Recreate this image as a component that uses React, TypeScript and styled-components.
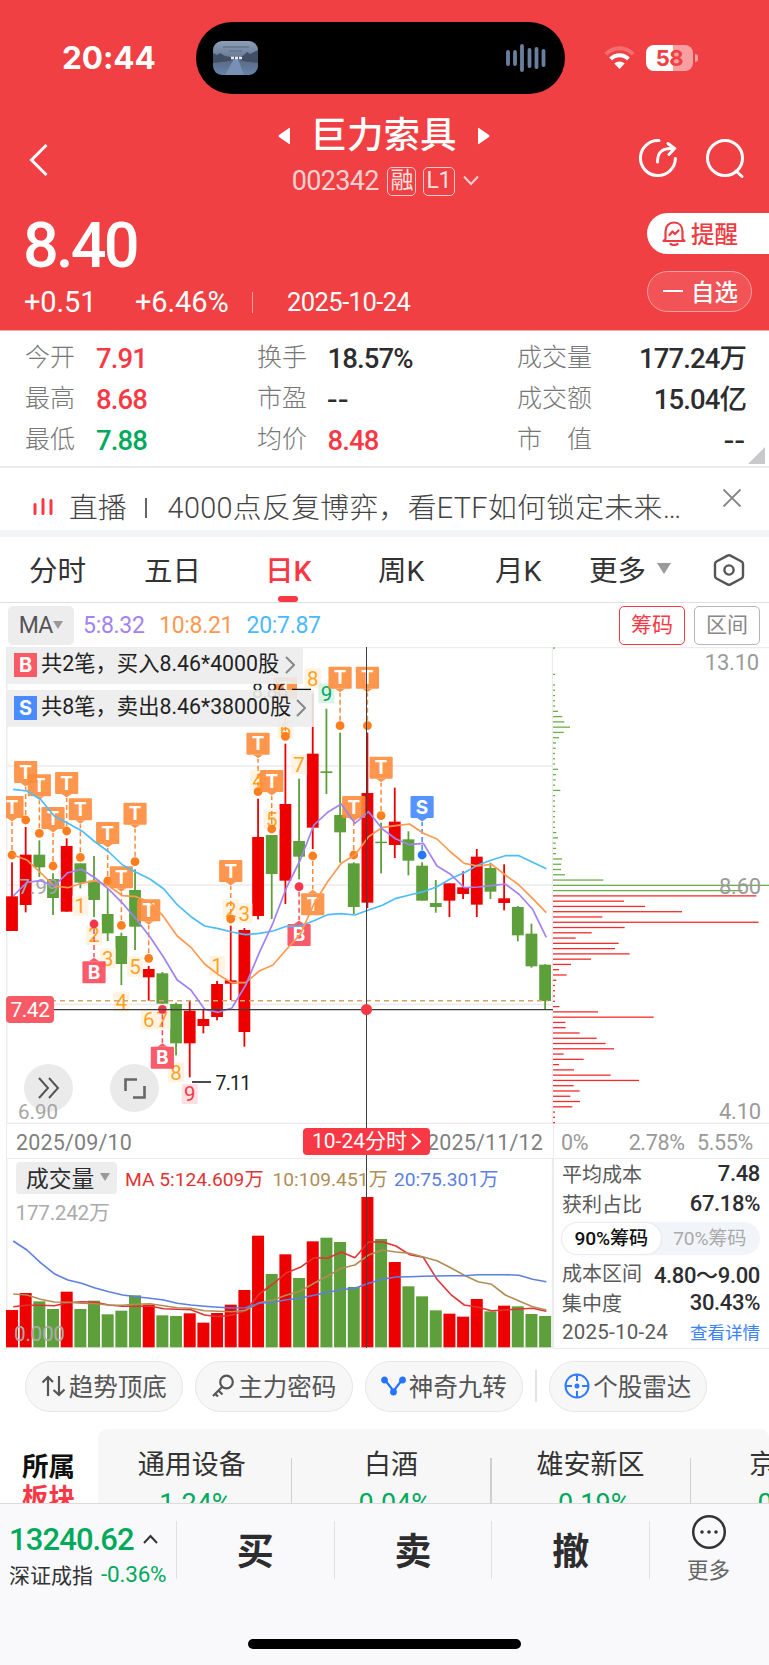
import React from "react";
import styled, { createGlobalStyle } from "styled-components";

const RED = "#f83845";
const GREEN = "#00a95c";
const UP = "#ee0000";
const DOWN = "#5d9f3a";
const FONT = `Roboto, "Noto Sans CJK SC", sans-serif`;

const Global = createGlobalStyle`
  * { box-sizing: border-box; }
  html, body { margin: 0; padding: 0; background: #fff; }
  body { width: 769px; height: 1665px; overflow: hidden; font-family: ${FONT}; color: #2d2d2f; }
  svg { display: block; flex: none; }
`;

const Page = styled.div`
  width: 769px;
  height: 1665px;
  display: flex;
  flex-direction: column;
  overflow: hidden;
  background: #fff;
`;

/* ---------- header ---------- */
const Header = styled.header`
  height: 331px;
  flex: none;
  background: #f04043;
  border-bottom: 1px solid #f8a5a7;
  color: #fff;
`;
const StatusBar = styled.div`
  height: 116px;
  display: flex;
  padding: 22px 0 0 62px;
`;
const Clock = styled.div`
  width: 134px;
  height: 72px;
  font: 700 31.5px/72px Inter, sans-serif;
  letter-spacing: -0.1px;
`;
const Island = styled.div`
  width: 369px;
  height: 72px;
  border-radius: 36px;
  background: #000;
  display: flex;
  align-items: center;
  justify-content: space-between;
  padding: 0 19px 0 17px;
`;
const StatusIcons = styled.div`
  height: 72px;
  margin: 0 0 0 39px;
  padding-bottom: 1px;
  display: flex;
  align-items: center;
  gap: 11px;
`;
const Battery = styled.div`
  width: 47px;
  height: 26px;
  border-radius: 8px;
  background: linear-gradient(90deg, #fff 57%, #f8a0a1 57%);
  color: #f04043;
  font: 700 22px/26px Inter, sans-serif;
  text-align: center;
  letter-spacing: -0.5px;
`;
const BatteryCap = styled.div`
  width: 3px;
  height: 8px;
  margin-left: -9px;
  border-radius: 0 3px 3px 0;
  background: #f8a0a1;
`;
const TitleBar = styled.div`
  height: 90px;
  display: grid;
  grid-template-columns: 250px 1fr 250px;
`;
const BackSlot = styled.div`
  padding: 27px 0 0 29px;
`;
const TitleActions = styled.div`
  display: flex;
  justify-content: flex-end;
  gap: 25px;
  padding: 22px 24px 0 0;
`;
const TitleCol = styled.div`
  display: flex;
  flex-direction: column;
  align-items: center;
`;
const StockName = styled.div`
  display: flex;
  align-items: center;
  gap: 20px;
  height: 40px;
  margin-right: 2px;
  font-size: 36.5px;
  font-weight: 500;
  line-height: 40px;
`;
const StockCode = styled.div`
  display: flex;
  align-items: center;
  gap: 6.5px;
  height: 30px;
  margin: 10px 0 0 4px;
  line-height: 30px;
  font-size: 27px;
  color: #fcd0d1;
  letter-spacing: -0.7px;
`;
const CodeText = styled.span`
  margin-right: 2px;
`;
const Badge = styled.span<{ $w: number }>`
  width: ${(p) => p.$w}px;
  height: 29px;
  border: 1.5px solid #fcc9ca;
  border-radius: 5px;
  font-size: 23px;
  line-height: 26px;
  text-align: center;
  letter-spacing: -0.5px;
  color: #fee2e2;
`;
const PriceArea = styled.div`
  height: 124px;
  display: flex;
  justify-content: space-between;
`;
const Price = styled.div`
  font-size: 63px;
  font-weight: 500;
  line-height: 70px;
  letter-spacing: -2.8px;
  padding: 5px 0 0 23px;
`;
const ChangeRow = styled.div`
  display: flex;
  align-items: center;
  height: 30px;
  margin-top: 6px;
  padding-left: 24px;
  font-size: 29px;
  line-height: 30px;
  letter-spacing: -0.1px;
`;
const ChangeItem = styled.span<{ $w: number }>`
  width: ${(p) => p.$w}px;
`;
const ChangeDate = styled.span`
  font-size: 25.5px;
  letter-spacing: -0.55px;
  padding-left: 34px;
  margin-left: 23px;
  border-left: 1px solid #f7a0a2;
  height: 21px;
  line-height: 21px;
`;
const PillCol = styled.div`
  display: flex;
  flex-direction: column;
  gap: 17px;
  width: 122px;
  padding-top: 7px;
`;
const AlertPill = styled.div`
  height: 41px;
  border-radius: 21px 0 0 21px;
  background: #fff;
  color: #ef3a41;
  display: flex;
  align-items: center;
  gap: 4px;
  padding: 0 0 1px 14px;
  font-size: 23.5px;
  font-weight: 500;
`;
const WatchPill = styled.div`
  height: 41px;
  width: 105px;
  border-radius: 21px;
  border: 1.5px solid #f79fa1;
  background: #f15356;
  display: flex;
  align-items: center;
  gap: 8px;
  padding: 0 0 1px 15px;
  font-size: 23.5px;
  font-weight: 500;
`;
const Minus = styled.i`
  width: 20px;
  height: 2.5px;
  background: #fff;
`;

/* ---------- quote stats ---------- */
const Stats = styled.section`
  position: relative;
  height: 137px;
  flex: none;
  padding: 6px 23px 0 25px;
  display: grid;
  grid-template-columns: 232px 260px 1fr;
  grid-auto-rows: 41.2px;
  border-bottom: 2px solid #ececee;
`;
const Stat = styled.div`
  display: flex;
  align-items: center;
  line-height: 41px;
`;
const StatLabel = styled.span<{ $w: number }>`
  width: ${(p) => p.$w}px;
  font-size: 25px;
  font-weight: 300;
  color: #777;
  white-space: pre;
`;
const StatValue = styled.span<{ $color?: string; $right?: boolean; $dash?: boolean }>`
  font-size: ${(p) => (p.$dash ? 34 : 27.5)}px;
  font-weight: ${(p) => (p.$dash ? 400 : 500)};
  letter-spacing: ${(p) => (p.$dash ? 1.5 : -0.9)}px;
  padding-top: 2px;
  color: ${(p) => p.$color ?? "#2d2d2f"};
  margin-left: ${(p) => (p.$right ? "auto" : 0)};
`;
const Corner = styled.i`
  position: absolute;
  right: 4px;
  bottom: 2px;
  border-bottom: 17px solid #c9c9cb;
  border-left: 17px solid transparent;
`;

/* ---------- live notice ---------- */
const Notice = styled.section`
  height: 62px;
  flex: none;
  display: flex;
  padding: 17px 27px 0 33px;
  font-size: 28.8px;
  font-weight: 300;
  line-height: 46px;
  color: #444;
  white-space: pre;
`;
const NoticeTag = styled.span`
  margin: 0 18px 0 16px;
`;
const NoticeBar = styled.i`
  width: 2px;
  height: 20px;
  margin: 13px 21px 0 0;
  background: #666;
`;
const NoticeText = styled.span`
  flex: 1;
  letter-spacing: 0.34px;
`;
const Band = styled.div`
  height: 7px;
  flex: none;
  background: #f2f4f8;
`;

/* ---------- tabs ---------- */
const Tabs = styled.nav`
  height: 66px;
  flex: none;
  display: grid;
  grid-template-columns: 115px 121px 113px 117px 94px 124px 32px;
  align-items: center;
  padding-left: 29px;
  border-bottom: 1.5px solid #dedee0;
  font-size: 28.5px;
`;
const Tab = styled.span<{ $active?: boolean }>`
  justify-self: start;
  height: 65px;
  padding-bottom: 3px;
  color: ${(p) => (p.$active ? RED : "#333")};
  font-weight: ${(p) => (p.$active ? 500 : 400)};
  position: relative;
  display: flex;
  align-items: center;
  gap: 11px;
  &::after {
    content: "";
    display: ${(p) => (p.$active ? "block" : "none")};
    position: absolute;
    bottom: 0;
    left: 50%;
    margin-left: -10px;
    width: 20px;
    height: 6px;
    border-radius: 3px;
    background: ${RED};
  }
`;
const Caret = styled.i<{ $w: number; $h: number }>`
  border-top: ${(p) => p.$h}px solid #999;
  border-left: ${(p) => p.$w / 2}px solid transparent;
  border-right: ${(p) => p.$w / 2}px solid transparent;
`;

/* ---------- MA row ---------- */
const MaRow = styled.div`
  height: 44px;
  flex: none;
  display: flex;
  align-items: center;
  padding: 0 9px 0 8px;
  font-size: 23px;
`;
const MaButton = styled.span`
  width: 66px;
  height: 39px;
  border-radius: 5px;
  background: #ededed;
  color: #555;
  display: flex;
  align-items: center;
  justify-content: center;
  gap: 1px;
  font-size: 23px;
  letter-spacing: -1px;
  margin-right: 9px;
`;
const MaValue = styled.span<{ $color: string; $w: number }>`
  width: ${(p) => p.$w}px;
  color: ${(p) => p.$color};
  letter-spacing: -0.3px;
`;
const ModeButton = styled.span<{ $active?: boolean }>`
  width: 66px;
  height: 39px;
  border: 1.5px solid ${(p) => (p.$active ? RED : "#b5b5b8")};
  color: ${(p) => (p.$active ? RED : "#888")};
  border-radius: 5px;
  font-size: 21px;
  line-height: 36px;
  text-align: center;
  margin-left: ${(p) => (p.$active ? "auto" : "9px")};
`;

/* ---------- chart area ---------- */
const ChartArea = styled.section`
  position: relative;
  height: 702px;
  flex: none;
  display: grid;
  grid-template-columns: 553px 216px;
`;
const Column = styled.div`
  display: flex;
  flex-direction: column;
`;
const AxisRow = styled.div`
  height: 35px;
  flex: none;
  display: flex;
  align-items: center;
  justify-content: space-between;
  border-bottom: 1.5px solid #ececee;
  color: #808080;
  font-size: 21.5px;
  padding-top: 2px;
`;
const DateAxis = styled(AxisRow)`
  margin-left: 6px;
  padding-left: 9px;
  padding-right: 10px;
  border-left: 1.5px solid #ececee;
  letter-spacing: 0.15px;
`;
const PercentAxis = styled(AxisRow)`
  padding-left: 7px;
  padding-right: 16px;
  border-left: 1.5px solid #ececee;
  color: #999;
  letter-spacing: -0.35px;
`;
const MiddlePercent = styled.span`
  margin-left: 28px;
`;
const Crosshair = styled.i`
  position: absolute;
  left: 366px;
  top: 0;
  width: 1px;
  height: 701px;
  background: #3f3f3f;
`;
const CrossDot = styled.i`
  position: absolute;
  left: 361px;
  top: 357px;
  width: 11px;
  height: 11px;
  border-radius: 50%;
  background: ${RED};
`;
const DateTag = styled.div`
  position: absolute;
  left: 303px;
  top: 481px;
  width: 127px;
  height: 27px;
  border-radius: 4px;
  background: ${RED};
  color: #fff;
  display: flex;
  align-items: center;
  justify-content: center;
  gap: 4px;
  font-size: 21px;
  line-height: 27px;
`;
const TradeBar = styled.div<{ $top: number; $w: number }>`
  position: absolute;
  left: 6px;
  top: ${(p) => p.$top}px;
  width: ${(p) => p.$w}px;
  height: 37px;
  padding: 0 8px 1px;
  background: rgba(236, 236, 236, 0.9);
  display: flex;
  align-items: center;
  font-size: 21.3px;
  line-height: 30px;
  white-space: nowrap;
  color: #222;
`;
const TradeFlag = styled.b<{ $color: string }>`
  width: 23px;
  height: 24px;
  margin-right: 4px;
  background: ${(p) => p.$color};
  color: #fff;
  font: 700 20px/24px Inter, sans-serif;
  text-align: center;
`;
const TradeText = styled.span`
  flex: 1;
  margin-top: -2px;
`;
const RoundButton = styled.div<{ $left: number }>`
  position: absolute;
  left: ${(p) => p.$left}px;
  top: 417px;
  width: 49px;
  height: 48px;
  border-radius: 50%;
  background: rgba(232, 232, 232, 0.9);
  display: grid;
  place-items: center;
`;
const LowLabel = styled.span`
  position: absolute;
  left: 18px;
  top: 453px;
  font-size: 20.5px;
  line-height: 24px;
  color: #a6a6a6;
`;
const PriceTag = styled.div`
  position: absolute;
  left: 6px;
  top: 349px;
  width: 48px;
  height: 27px;
  border-radius: 4px;
  background: #f95b66;
  color: #fff;
  font-size: 21px;
  line-height: 28px;
  text-align: center;
  letter-spacing: -0.5px;
`;
const VolumePane = styled.div`
  position: relative;
  height: 190px;
`;
const VolumeHead = styled.div`
  position: absolute;
  inset: 3px 0 auto 16px;
  display: flex;
  align-items: center;
  font-size: 19.2px;
`;
const VolumeButton = styled.span`
  width: 101px;
  height: 32px;
  border-radius: 4px;
  background: #ededed;
  display: flex;
  align-items: center;
  gap: 6px;
  padding: 0 0 2px 10px;
  margin-right: 8px;
  font-size: 22.8px;
`;
const VolumeMa = styled.span<{ $color: string; $w: number }>`
  width: ${(p) => p.$w}px;
  color: ${(p) => p.$color};
  white-space: nowrap;
`;
const ChipPanel = styled.div`
  height: 190px;
  border-left: 1.5px solid #ececee;
  border-bottom: 1.5px solid #ececee;
  padding: 0 9px 0 8px;
`;
const ChipRow = styled.div`
  height: 29.5px;
  display: flex;
  align-items: center;
  justify-content: space-between;
  font-size: 20px;
  color: #5a5a5a;
  white-space: nowrap;
`;
const ChipDate = styled.span`
  font-size: 20.5px;
  letter-spacing: 0.25px;
`;
const ChipValue = styled.b`
  font-size: 22px;
  font-weight: 500;
  color: #2d2d2f;
  letter-spacing: -0.35px;
`;
const ChipLink = styled.span`
  font-size: 17.5px;
  color: #3a80ff;
`;
const Segmented = styled.div`
  display: flex;
  height: 33px;
  margin: 4px 0 3px -1px;
  padding: 1px;
  border-radius: 17px;
  background: #f1f5f9;
`;
const Segment = styled.span<{ $active?: boolean }>`
  flex: 1;
  border-radius: 16px;
  background: ${(p) => (p.$active ? "#fff" : "transparent")};
  box-shadow: ${(p) => (p.$active ? "0 0 3px rgba(0,0,0,.1)" : "none")};
  color: ${(p) => (p.$active ? "#111" : "#aaa")};
  font-size: 19.2px;
  font-weight: ${(p) => (p.$active ? 500 : 400)};
  line-height: 31px;
  text-align: center;
  letter-spacing: -0.2px;
`;

/* ---------- tool pills ---------- */
const Tools = styled.div`
  height: 80px;
  flex: none;
  display: flex;
  align-items: flex-start;
  gap: 12.5px;
  padding: 12px 0 0 25px;
`;
const Tool = styled.span`
  width: 157.5px;
  height: 51px;
  border-radius: 26px;
  border: 1.5px solid #e6e6e8;
  background: #f7f7f8;
  color: #555;
  font-size: 24.5px;
  display: flex;
  align-items: center;
  justify-content: center;
  gap: 3px;
  padding-bottom: 2px;
`;
const ToolDivider = styled.i`
  width: 1.5px;
  height: 32px;
  margin-top: 9px;
  background: #e3e3e5;
`;

/* ---------- sectors ---------- */
const Sectors = styled.section`
  height: 74px;
  flex: none;
  display: flex;
  overflow: hidden;
`;
const SectorTitle = styled.div`
  width: 98px;
  flex: none;
  padding: 22px 0 0 22px;
  font-size: 26.5px;
  font-weight: 700;
  line-height: 31px;
  color: #111;
`;
const SectorAccent = styled.div`
  color: ${RED};
`;
const SectorPanel = styled.div`
  flex: none;
  width: 671px;
  display: flex;
  overflow: hidden;
  border-radius: 9px 9px 0 0;
  background: #f7f7f7;
  padding-top: 17px;
`;
const Sector = styled.div`
  position: relative;
  width: 199.4px;
  flex: none;
  text-align: center;
  font-size: 27px;
  line-height: 38px;
  color: #333;
  padding-right: 12px;
  &::after {
    content: "";
    position: absolute;
    right: 5px;
    top: 12px;
    width: 1.5px;
    height: 60px;
    background: #cfcfd1;
  }
`;
const SectorChange = styled.div`
  margin-top: 1px;
  font-size: 27px;
  color: ${GREEN};
`;

/* ---------- bottom bar ---------- */
const Bottom = styled.footer`
  height: 162px;
  flex: none;
  background: #f9f9fc;
  border-top: 1.5px solid #dbdbde;
  display: flex;
  flex-direction: column;
  align-items: center;
  justify-content: space-between;
`;
const Actions = styled.div`
  width: 769px;
  height: 95px;
  padding-top: 17px;
  display: flex;
`;
const IndexBox = styled.div`
  width: 176px;
  padding-left: 9px;
  margin-top: -1px;
`;
const IndexValue = styled.div`
  height: 38px;
  display: flex;
  align-items: center;
  gap: 9px;
  font-size: 31px;
  font-weight: 500;
  letter-spacing: -0.9px;
  color: ${GREEN};
`;
const IndexName = styled.div`
  display: flex;
  align-items: center;
  height: 31px;
  gap: 8px;
  font-size: 21px;
  color: #333;
  white-space: nowrap;
`;
const IndexChange = styled.span`
  color: ${GREEN};
  font-size: 22.5px;
  letter-spacing: -0.2px;
`;
const Action = styled.div`
  width: 157.7px;
  height: 58px;
  border-left: 1.5px solid #e0e0e3;
  font-size: 37px;
  font-weight: 700;
  line-height: 63px;
  text-align: center;
`;
const More = styled.div`
  flex: 1;
  height: 58px;
  border-left: 1.5px solid #e0e0e3;
  padding-right: 2px;
  display: flex;
  flex-direction: column;
  align-items: center;
  font-size: 21.5px;
  line-height: 30px;
  color: #666;
  gap: 6px;
  & > svg { margin-top: -7px; }
`;
const HomeIndicator = styled.i`
  width: 273px;
  height: 10px;
  border-radius: 5px;
  margin-bottom: 16px;
  background: #000;
`;

/* ---------- chart data ---------- */
const STEP = 13.67;
const cx = (i: number) => 12 + STEP * i;
const py = (v: number) => 640 + v / 3;
const vy = (v: number) => 1110 + v / 3;

// [rising, high, body top, body bottom, low]
const candles: [number, number, number, number, number][] = [
  [1, 667, 769, 873, 873], [1, 561, 644, 795, 817], [0, 601, 644, 682, 711], [0, 700, 717, 774, 825],
  [1, 595, 618, 815, 815], [0, 670, 670, 728, 745], [0, 648, 722, 780, 831], [0, 747, 822, 880, 903],
  [0, 878, 888, 972, 1035], [0, 688, 750, 860, 930], [1, 978, 987, 1012, 1082], [0, 996, 1000, 1091, 1091],
  [0, 1088, 1092, 1210, 1246], [1, 1083, 1112, 1210, 1312], [1, 1108, 1137, 1158, 1180], [1, 1023, 1032, 1131, 1141],
  [1, 857, 1021, 1031, 1080], [1, 864, 870, 1176, 1220], [1, 476, 591, 828, 838], [0, 585, 585, 702, 837],
  [1, 311, 492, 722, 792], [0, 416, 603, 650, 718], [1, 160, 341, 563, 627], [0, 206, 394, 399, 462],
  [0, 278, 525, 577, 668], [0, 667, 670, 801, 822], [1, 278, 459, 788, 804], [0, 548, 605, 609, 700],
  [1, 443, 545, 615, 654], [0, 574, 598, 662, 706], [0, 667, 677, 782, 782], [0, 720, 789, 801, 818],
  [1, 730, 730, 782, 831], [1, 694, 742, 762, 777], [1, 627, 650, 794, 831], [0, 668, 684, 755, 777],
  [1, 673, 775, 789, 811], [0, 798, 801, 886, 904], [0, 851, 881, 979, 983], [0, 973, 974, 1083, 1108],
];
const ma5 = [768, 727, 722, 738, 698, 688, 714, 748, 790, 838, 890, 952, 1020, 1050, 1108, 1117, 1104, 1036, 938, 850, 742, 660, 555, 517, 492, 550, 515, 567, 597, 614, 610, 678, 703, 743, 741, 737, 732, 763, 808, 892];
const ma10 = [645, 660, 698, 738, 743, 730, 722, 738, 767, 770, 786, 830, 888, 922, 972, 1004, 1028, 1028, 993, 975, 928, 883, 792, 725, 670, 645, 590, 562, 557, 552, 580, 597, 636, 670, 678, 673, 705, 735, 776, 818];
const ma20 = [448, 453, 478, 528, 550, 572, 606, 636, 675, 697, 717, 746, 794, 830, 858, 866, 876, 884, 880, 873, 859, 858, 842, 824, 821, 825, 810, 796, 775, 765, 755, 740, 716, 698, 675, 660, 647, 647, 667, 686];
const volumes = [600, 549, 574, 597, 545, 597, 572, 613, 602, 556, 584, 616, 618, 610, 638, 609, 584, 540, 377, 492, 433, 504, 394, 383, 396, 531, 261, 387, 456, 529, 559, 601, 611, 620, 567, 604, 587, 589, 612, 618];
const vma5 = [590, 586, 586, 587, 578, 575, 577, 585, 589, 589, 588, 596, 598, 599, 615, 620, 615, 602, 552, 522, 488, 472, 443, 445, 426, 443, 396, 395, 408, 434, 442, 508, 553, 585, 592, 602, 600, 597, 595, 604];
const vma10 = [552, 555, 568, 576, 577, 580, 581, 585, 586, 583, 581, 587, 593, 595, 602, 604, 605, 601, 578, 570, 555, 544, 520, 498, 475, 465, 435, 420, 426, 430, 441, 452, 473, 496, 515, 523, 555, 573, 590, 600];
const vma20 = [393, 420, 458, 491, 510, 520, 534, 545, 555, 560, 565, 570, 580, 585, 589, 592, 594, 593, 580, 577, 569, 565, 556, 547, 539, 535, 520, 508, 501, 500, 499, 498, 497, 497, 494, 494, 494, 496, 508, 515];

// [candle index, y, digit]
const counts: [number, number, string][] = [
  [5, 797, "1"], [6, 885, "2"], [7, 955, "3"], [8, 1085, "4"], [9, 980, "5"], [10, 1138, "6"], [11, 1138, "7"],
  [12, 1297, "8"], [13, 1362, "9"], [15, 977, "1"], [16, 808, "2"], [17, 820, "3"], [18, 421, "4"], [19, 538, "5"],
  [20, 268, "6"], [21, 373, "7"], [22, 115, "8"], [23, 160, "9"],
];
// [candle index, dot y, letter, flag below the dot]
const flags: [number, number, string, boolean?][] = [
  [2, 580, "T"], [0, 645, "T"], [1, 540, "T"], [3, 678, "T"], [4, 573, "T"], [5, 652, "T"], [7, 723, "T"],
  [8, 856, "T"], [9, 665, "T"], [10, 955, "T"], [16, 837, "T"], [18, 455, "T"], [19, 567, "T"], [20, 289, "T"],
  [24, 257, "T"], [25, 645, "T"], [26, 257, "T"], [27, 527, "T"], [30, 645, "S"],
  [22, 648, "T", true], [6, 852, "B", true], [11, 1108, "B", true], [21, 740, "B", true],
];
const flagColor: Record<string, [string, string]> = {
  T: ["#ff8b3a", "#fd7e1e"],
  S: ["#4389ff", "#2277ff"],
  B: ["#f94a5c", "#f5354a"],
};
const chips = [
  6, 0, 0, 0, 0, 6, 0, 6, 6, 6, 6, 6, 15, 28, 34, 51, 32, 18, 9, 8, 6, 6, 6, 15, 9, 8, 6, 22, 6, 6, 6, 6, 6, 6, 6, 10,
  15, 8, 9, 9, 27, 25, 24, 36, 151, 648, 568, 610, 213, 276, 387, 148, 617, 215, 116, 68, 197, 186, 230, 114, 54, 18,
  41, 10, 6, 6, 6, 6, 19, 135, 302, 37, 38, 80, 131, 158, 183, 32, 92, 18, 63, 173, 258, 62, 80, 52, 81, 58, 6, 6, 6,
];

const path = (vals: number[], y: (v: number) => number) =>
  vals.map((v, i) => `${i ? "L" : "M"}${(cx(i) + 1.2).toFixed(1)} ${y(v).toFixed(1)}`).join("");

function Flag({ i, y, letter, below }: { i: number; y: number; letter: string; below?: boolean }) {
  const x = cx(i);
  const dot = py(y);
  const [fill, dotFill] = flagColor[letter];
  const top = below ? dot + 37.3 : dot - 59;
  const tip = below
    ? `M${x - 5} ${top}L${x} ${top - 3.5}L${x + 5} ${top}Z`
    : `M${x - 5} ${top + 22}L${x} ${top + 25.5}L${x + 5} ${top + 22}Z`;
  return (
    <g>
      <path
        d={below ? `M${x} ${dot + 5}V${top - 4}` : `M${x} ${dot - 5}V${top + 26}`}
        stroke={fill}
        strokeWidth="1.5"
        strokeDasharray="5 3"
      />
      <g opacity=".9">
        <rect x={x - 11.6} y={top} width="23.2" height="22" rx="1" fill={fill} />
        <path d={tip} fill={fill} />
      </g>
      <text x={x} y={top + 17.5} fontSize="19" fontWeight="700" fontFamily="Inter, sans-serif" fill="#fff" textAnchor="middle">
        {letter}
      </text>
      <circle cx={x} cy={dot} r="4.4" fill={dotFill} />
    </g>
  );
}

function KLine() {
  return (
    <svg width="553" height="477" viewBox="0 647 553 477" fill="none" fontFamily={FONT}>
      <path d="M6 647.6H553M6 766H553M6 885H553M6 1004.5H553M6 1123.4H553M6.7 647V1124M552.5 647V1124" stroke="#ececee" strokeWidth="1.4" />
      <clipPath id="plot"><rect x="6" y="647" width="547" height="477" /></clipPath>
      <g clipPath="url(#plot)">
        {candles.map(([up, h, t, b, l], i) => (
          <g key={i} fill={up ? UP : DOWN}>
            <rect x={cx(i) - 0.9} y={py(h)} width="1.8" height={(l - h) / 3} />
            <rect x={cx(i) - 5.9} y={py(t)} width="11.8" height={Math.max((b - t) / 3, 1.5)} />
          </g>
        ))}
        {counts.map(([i, y, n], k) => {
          const hot = n === "9";
          const green = hot && i === 23;
          return (
            <g key={k}>
              <rect x={cx(i) - 8} y={py(y) - 10} width="16" height="20" fill={green ? "#d3f1e2" : hot ? "#ffdcdf" : "#fff1df"} opacity=".85" />
              <text x={cx(i)} y={py(y) + 7.3} fontSize="20.5" textAnchor="middle" fill={green ? GREEN : hot ? RED : "#ffa31f"}>{n}</text>
            </g>
          );
        })}
        {flags.map(([i, y, c, below], k) => <Flag key={k} i={i} y={y} letter={c} below={below} />)}
      </g>
      <path d="M6 1000.7H548" stroke="#d3a566" strokeWidth="1.5" strokeDasharray="5 4" />
      <text x="18.5" y="894" fontSize="20.5" fill="#a6a6a6">7.99</text>
      <g strokeWidth="1.7" strokeLinejoin="round">
        <path d={path(ma20, py)} stroke="#4cbcff" />
        <path d={path(ma10, py)} stroke="#ff9950" />
        <path d={path(ma5, py)} stroke="#a382f2" />
      </g>
      <path d="M6 1009.6H553" stroke="#3c3c3c" strokeWidth="1.3" />
      <path d="M192 1082H211M292 689.6H311" stroke="#111" strokeWidth="1.5" />
      <g fontSize="19.5" fill="#222" letterSpacing="-.8">
        <text x="215.5" y="1089.5">7.11</text>
        <text x="252" y="698">8.86</text>
      </g>
    </svg>
  );
}

function ChipChart() {
  return (
    <svg width="216" height="477" viewBox="553 647 216 477" fill="none" fontFamily={FONT}>
      <path d="M553 647.6H769M553 1123.4H769" stroke="#ececee" strokeWidth="1.4" />
      {chips.map((w, i) =>
        w ? <rect key={i} x="553" y={647.4 + 5.273 * i} width={w / 3} height="1.3" fill={i < 47 ? "#6cae48" : "#f42c2c"} /> : null,
      )}
      <g fontSize="22" fill="#9a9a9a" textAnchor="end" letterSpacing="-.2">
        <text x="759" y="669.5">13.10</text>
        <text x="761" y="894.3">8.60</text>
        <text x="761" y="1119">4.10</text>
      </g>
    </svg>
  );
}

function VolumeChart() {
  return (
    <svg width="553" height="190" viewBox="0 1159 553 190" fill="none" fontFamily={FONT}>
      <path d="M6.7 1158V1348M552.5 1158V1348M6 1347.5H553" stroke="#ececee" strokeWidth="1.4" />
      {volumes.map((v, i) => (
        <rect key={i} x={cx(i) - 6} y={vy(v)} width="12" height={1347.3 - vy(v)} fill={candles[i][0] ? UP : DOWN} />
      ))}
      <g fill="#ababab" letterSpacing="-.3" fontSize="20.8">
        <text x="15.5" y="1219.5">177.242万</text>
        <text x="14" y="1340.5">0.000</text>
      </g>
      <g strokeWidth="1.6" strokeLinejoin="round">
        <path d={path(vma5, vy)} stroke="#e03434" />
        <path d={path(vma10, vy)} stroke="#b18d55" />
        <path d={path(vma20, vy)} stroke="#5c7fe2" />
      </g>
    </svg>
  );
}

const Chevron = ({ w, h, color, sw = 2 }: { w: number; h: number; color: string; sw?: number }) => (
  <svg width={w} height={h} viewBox={`0 0 ${w} ${h}`} fill="none">
    <path d={`M1 1L${w - 1} ${h / 2}L1 ${h - 1}`} stroke={color} strokeWidth={sw} />
  </svg>
);

const quoteRows: [string, string, string?][][] = [
  [["今开", "7.91", RED], ["换手", "18.57%"], ["成交量", "177.24万"]],
  [["最高", "8.68", RED], ["市盈", "--"], ["成交额", "15.04亿"]],
  [["最低", "7.88", GREEN], ["均价", "8.48", RED], ["市　值", "--"]],
];

export default function App() {
  return (
    <Page>
      <Global />
      <Header>
        <StatusBar>
          <Clock>20:44</Clock>
          <Island>
            <svg width="45" height="34" viewBox="0 0 45 34">
              <defs>
                <linearGradient id="sky" x1="0" y1="0" x2="0" y2="1">
                  <stop offset="0" stopColor="#8b9fba" />
                  <stop offset=".4" stopColor="#6f819b" />
                  <stop offset=".6" stopColor="#5c6c86" />
                  <stop offset="1" stopColor="#6583ad" />
                </linearGradient>
                <clipPath id="cover"><rect width="45" height="34" rx="9" /></clipPath>
              </defs>
              <g clipPath="url(#cover)">
                <rect width="45" height="34" fill="url(#sky)" />
                <path d="M0 12L4 14L7 12L12 15L17 16L27 16L31 14L34 11L37 13L41 11L45 9V22L30 20L24 18L17 20L0 22Z" fill="#414e63" />
                <path d="M21 18H25L31 34H12Z" fill="#7890b5" />
                <path d="M10 6H36M16 10H29" stroke="#66758b" strokeWidth="1.5" />
                <path d="M18 17H29" stroke="#e8eef5" strokeWidth="2.5" strokeDasharray="3 1" />
              </g>
            </svg>
            <svg width="41" height="30" viewBox="0 0 41 30" stroke="#6a7f9e" strokeWidth="3.8" strokeLinecap="round">
              <path d="M3 9V21M10 9V21M17 3V27M24.5 7V23M31.5 6V24M38.5 8V22" />
            </svg>
          </Island>
          <StatusIcons>
            <svg width="31" height="24" viewBox="0 0 31 24" fill="none">
              <path d="M1.8 8.2C9.5 .2 21.5 .2 29.2 8.2" stroke="#f56e70" strokeWidth="4" />
              <path d="M6.6 13C11.6 8 19.4 8 24.4 13" stroke="#fff" strokeWidth="4" />
              <path d="M15.5 23L10.3 17.6C13.3 14.8 17.7 14.8 20.7 17.6Z" fill="#fff" />
            </svg>
            <Battery>58</Battery>
            <BatteryCap />
          </StatusIcons>
        </StatusBar>
        <TitleBar>
          <BackSlot>
            <svg width="20" height="34" viewBox="0 0 20 34" fill="none" stroke="#fff" strokeWidth="3">
              <path d="M17.5 2L2.5 17L17.5 32" />
            </svg>
          </BackSlot>
          <TitleCol>
            <StockName>
              <svg width="13" height="18" viewBox="0 0 13 18"><path d="M12 2V16Q12 18 10.5 16.5L1 10Q0 9 1 8L10.5 1.5Q12 0 12 2Z" fill="#fff" /></svg>
              <span>巨力索具</span>
              <svg width="13" height="18" viewBox="0 0 13 18"><path d="M1 2V16Q1 18 2.5 16.5L12 10Q13 9 12 8L2.5 1.5Q1 0 1 2Z" fill="#fff" /></svg>
            </StockName>
            <StockCode>
              <CodeText>002342</CodeText>
              <Badge $w={29}>融</Badge>
              <Badge $w={32}>L1</Badge>
              <svg width="20" height="12" viewBox="0 0 20 12" fill="none" stroke="#fcd0d1" strokeWidth="2"><path d="M3 1.5L10 9L17 1.5" /></svg>
            </StockCode>
          </TitleCol>
          <TitleActions>
            <svg width="42" height="42" viewBox="0 0 42 42" fill="none" stroke="#fff" strokeWidth="3" strokeLinecap="round">
              <path d="M21 2.6A17.5 17.5 0 1 0 37.4 20.5" />
              <path d="M19.5 24C19.5 15 23 10.5 33 10.5" />
              <path d="M30 5.5L36.5 10.5L31 16.5" />
            </svg>
            <svg width="40" height="42" viewBox="0 0 40 42" fill="none" stroke="#fff" strokeWidth="3" strokeLinecap="round">
              <circle cx="20" cy="20" r="17.5" />
              <path d="M31 33L37 38.5" />
            </svg>
          </TitleActions>
        </TitleBar>
        <PriceArea>
          <div>
            <Price>8.40</Price>
            <ChangeRow>
              <ChangeItem $w={111}>+0.51</ChangeItem>
              <ChangeItem $w={94}>+6.46%</ChangeItem>
              <ChangeDate>2025-10-24</ChangeDate>
            </ChangeRow>
          </div>
          <PillCol>
            <AlertPill>
              <svg width="26" height="26" viewBox="0 0 26 26" fill="none" stroke="#ef3a41" strokeWidth="2.2" strokeLinejoin="round" strokeLinecap="round">
                <path d="M4.5 19V11.5C4.5 6 8 2.5 13 2.5S21.5 6 21.5 11.5V19L23.5 21H2.5Z" />
                <path d="M9.5 24Q13 26 16.5 24" />
                <path d="M8.5 15L11.5 11.5L14 14L17.5 10.5" />
              </svg>
              提醒
            </AlertPill>
            <WatchPill><Minus />自选</WatchPill>
          </PillCol>
        </PriceArea>
      </Header>

      <Stats>
        {quoteRows.flat().map(([label, value, color], i) => (
          <Stat key={label}>
            <StatLabel $w={i % 3 === 2 ? 80 : i % 3 === 1 ? 70.5 : 71}>{label}</StatLabel>
            <StatValue $color={color} $right={i % 3 === 2} $dash={value === "--"}>{value}</StatValue>
          </Stat>
        ))}
        <Corner />
      </Stats>

      <Notice>
        <svg width="20" height="46" viewBox="0 0 20 46" stroke={RED} strokeWidth="3" strokeLinecap="round">
          <path d="M2 19.5V28.5M10 14.5V28.5M18 15.5V28.5" />
        </svg>
        <NoticeTag>直播</NoticeTag>
        <NoticeBar />
        <NoticeText>4000点反复博弈，看ETF如何锁定未来…</NoticeText>
        <svg width="20" height="26" viewBox="0 0 20 26" stroke="#888" strokeWidth="1.8">
          <path d="M1.5 4.5L18.5 21.5M18.5 4.5L1.5 21.5" />
        </svg>
      </Notice>
      <Band />

      <Tabs>
        <Tab>分时</Tab>
        <Tab>五日</Tab>
        <Tab $active>日K</Tab>
        <Tab>周K</Tab>
        <Tab>月K</Tab>
        <Tab>更多<Caret $w={15} $h={11} /></Tab>
        <svg width="32" height="34" viewBox="0 0 32 34" fill="none" stroke="#555" strokeWidth="2.4" strokeLinejoin="round">
          <path d="M14.5 2.6Q16 1.8 17.5 2.6L28.5 8.5Q30 9.4 30 11V23Q30 24.6 28.5 25.5L17.5 31.4Q16 32.2 14.5 31.4L3.5 25.5Q2 24.6 2 23V11Q2 9.4 3.5 8.5Z" />
          <circle cx="16" cy="17" r="4.6" />
        </svg>
      </Tabs>

      <MaRow>
        <MaButton>MA<Caret $w={11} $h={8} /></MaButton>
        <MaValue $color="#a382f2" $w={76}>5:8.32</MaValue>
        <MaValue $color="#ff9950" $w={87.5}>10:8.21</MaValue>
        <MaValue $color="#4cb8ff" $w={80}>20:7.87</MaValue>
        <ModeButton $active>筹码</ModeButton>
        <ModeButton>区间</ModeButton>
      </MaRow>

      <ChartArea>
        <Column>
          <KLine />
          <DateAxis><span>2025/09/10</span><span>2025/11/12</span></DateAxis>
          <VolumePane>
            <VolumeChart />
            <VolumeHead>
              <VolumeButton>成交量<Caret $w={11} $h={8} /></VolumeButton>
              <VolumeMa $color="#e03434" $w={147.5}>MA 5:124.609万</VolumeMa>
              <VolumeMa $color="#b18d55" $w={121.5}>10:109.451万</VolumeMa>
              <VolumeMa $color="#5c7fe2" $w={110}>20:75.301万</VolumeMa>
            </VolumeHead>
          </VolumePane>
        </Column>
        <Column>
          <ChipChart />
          <PercentAxis><span>0%</span><MiddlePercent>2.78%</MiddlePercent><span>5.55%</span></PercentAxis>
          <ChipPanel>
            <ChipRow>平均成本<ChipValue>7.48</ChipValue></ChipRow>
            <ChipRow>获利占比<ChipValue>67.18%</ChipValue></ChipRow>
            <Segmented><Segment $active>90%筹码</Segment><Segment>70%筹码</Segment></Segmented>
            <ChipRow>成本区间<ChipValue>4.80～9.00</ChipValue></ChipRow>
            <ChipRow>集中度<ChipValue>30.43%</ChipValue></ChipRow>
            <ChipRow><ChipDate>2025-10-24</ChipDate><ChipLink>查看详情</ChipLink></ChipRow>
          </ChipPanel>
        </Column>
        <Crosshair />
        <CrossDot />
        <DateTag>10-24分时<Chevron w={10} h={17} color="#fff" /></DateTag>
        <TradeBar $top={0} $w={297}>
          <TradeFlag $color="#f95b66">B</TradeFlag>
          <TradeText>共2笔，买入8.46*4000股</TradeText>
          <Chevron w={10} h={18} color="#888" />
        </TradeBar>
        <TradeBar $top={43} $w={308}>
          <TradeFlag $color="#4a8cff">S</TradeFlag>
          <TradeText>共8笔，卖出8.46*38000股</TradeText>
          <Chevron w={10} h={18} color="#888" />
        </TradeBar>
        <PriceTag>7.42</PriceTag>
        <RoundButton $left={24}>
          <svg width="24" height="22" viewBox="0 0 24 22" fill="none" stroke="#555" strokeWidth="2"><path d="M2 1L11 11L2 21M12 1L21 11L12 21" /></svg>
        </RoundButton>
        <RoundButton $left={110}>
          <svg width="22" height="21" viewBox="0 0 22 21" fill="none" stroke="#666" strokeWidth="2.6"><path d="M1.5 13V1.5H13M20.5 8V19.5H9" /></svg>
        </RoundButton>
        <LowLabel>6.90</LowLabel>
      </ChartArea>

      <Tools>
        <Tool>
          <svg width="25" height="24" viewBox="0 0 25 24" fill="none" stroke="#555" strokeWidth="2.2"><path d="M7 22V3M1.5 8.5L7 3L12 8M18 2V21M12.5 16L18 21L23.5 15.5" /></svg>
          趋势顶底
        </Tool>
        <Tool>
          <svg width="24" height="24" viewBox="0 0 24 24" fill="none" stroke="#555" strokeWidth="2.2"><circle cx="15.5" cy="8" r="6.3" /><path d="M11.5 12.5L2 22M7.5 16.5L11.5 20.5M4 19.5L7 22.5" /></svg>
          主力密码
        </Tool>
        <Tool>
          <svg width="25" height="22" viewBox="0 0 25 22" fill="#2474ff" stroke="#2474ff" strokeWidth="2.2"><path d="M4 5L12.5 16L21 5" fill="none" /><circle cx="3.5" cy="5" r="2.3" /><circle cx="12.5" cy="17" r="2.3" /><circle cx="21.5" cy="5" r="2.3" /></svg>
          神奇九转
        </Tool>
        <ToolDivider />
        <Tool>
          <svg width="26" height="26" viewBox="0 0 26 26" fill="none" stroke="#2f7bff" strokeWidth="2"><circle cx="13" cy="13" r="11.5" /><path d="M13 1.5V8M13 18V24.5M1.5 13H8M18 13H24.5" /><circle cx="13" cy="13" r="1.5" fill="#2f7bff" /></svg>
          个股雷达
        </Tool>
      </Tools>

      <Sectors>
        <SectorTitle>所属<SectorAccent>板块</SectorAccent></SectorTitle>
        <SectorPanel>
          <Sector>通用设备<SectorChange>-1.24%</SectorChange></Sector>
          <Sector>白酒<SectorChange>-0.04%</SectorChange></Sector>
          <Sector>雄安新区<SectorChange>-0.19%</SectorChange></Sector>
          <Sector>京津冀<SectorChange>-0.05%</SectorChange></Sector>
        </SectorPanel>
      </Sectors>

      <Bottom>
        <Actions>
          <IndexBox>
            <IndexValue>
              13240.62
              <svg width="15" height="10" viewBox="0 0 15 10" fill="none" stroke="#333" strokeWidth="2"><path d="M1 9L7.5 2L14 9" /></svg>
            </IndexValue>
            <IndexName>深证成指<IndexChange>-0.36%</IndexChange></IndexName>
          </IndexBox>
          <Action>买</Action>
          <Action>卖</Action>
          <Action>撤</Action>
          <More>
            <svg width="36" height="36" viewBox="0 0 36 36" fill="none" stroke="#333" strokeWidth="2.5">
              <circle cx="18" cy="18" r="15.8" />
              <g fill="#333" stroke="none"><circle cx="11" cy="18" r="1.8" /><circle cx="18" cy="18" r="1.8" /><circle cx="25" cy="18" r="1.8" /></g>
            </svg>
            更多
          </More>
        </Actions>
        <HomeIndicator />
      </Bottom>
    </Page>
  );
}
